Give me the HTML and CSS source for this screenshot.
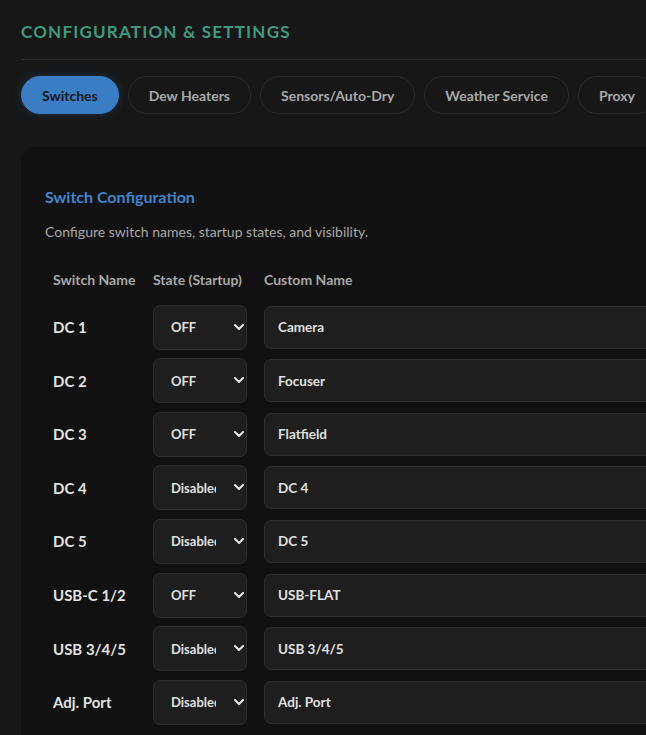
FILE: index.html
```html
<!DOCTYPE html>
<html lang="en">
<head>
  <meta charset="UTF-8" />
  <title>Configuration &amp; Settings</title>
  <meta name="viewport" content="width=device-width, initial-scale=1.0"/>
  <link rel="stylesheet" href="styles.css">
</head>
<body>

<h1 class="page-title">CONFIGURATION &amp; SETTINGS</h1>

<nav class="tabs">
  <button class="tab active">Switches</button>
  <button class="tab">Dew Heaters</button>
  <button class="tab">Sensors/Auto-Dry</button>
  <button class="tab">Weather Service</button>
  <button class="tab">Proxy</button>
</nav>

<section class="card">
  <h2 class="card-title">Switch Configuration</h2>
  <p class="card-desc">Configure switch names, startup states, and visibility.</p>

  <div class="switch-grid">
    <div class="col-head">Switch Name</div>
    <div class="col-head">State (Startup)</div>
    <div class="col-head">Custom Name</div>

    <div class="sw-name">DC 1</div>
    <div class="sel-wrap">
      <select><option>OFF</option><option>ON</option><option>Disabled</option></select>
      <svg class="chev" viewBox="0 0 10 6"><path d="M1 1l4 4 4-4" /></svg>
    </div>
    <div><input type="text" value="Camera" /></div>

    <div class="sw-name">DC 2</div>
    <div class="sel-wrap">
      <select><option>OFF</option><option>ON</option><option>Disabled</option></select>
      <svg class="chev" viewBox="0 0 10 6"><path d="M1 1l4 4 4-4" /></svg>
    </div>
    <div><input type="text" value="Focuser" /></div>

    <div class="sw-name">DC 3</div>
    <div class="sel-wrap">
      <select><option>OFF</option><option>ON</option><option>Disabled</option></select>
      <svg class="chev" viewBox="0 0 10 6"><path d="M1 1l4 4 4-4" /></svg>
    </div>
    <div><input type="text" value="Flatfield" /></div>

    <div class="sw-name">DC 4</div>
    <div class="sel-wrap">
      <select><option>Disabled</option><option>OFF</option><option>ON</option></select>
      <svg class="chev" viewBox="0 0 10 6"><path d="M1 1l4 4 4-4" /></svg>
    </div>
    <div><input type="text" value="DC 4" /></div>

    <div class="sw-name">DC 5</div>
    <div class="sel-wrap">
      <select><option>Disabled</option><option>OFF</option><option>ON</option></select>
      <svg class="chev" viewBox="0 0 10 6"><path d="M1 1l4 4 4-4" /></svg>
    </div>
    <div><input type="text" value="DC 5" /></div>

    <div class="sw-name">USB-C 1/2</div>
    <div class="sel-wrap">
      <select><option>OFF</option><option>ON</option><option>Disabled</option></select>
      <svg class="chev" viewBox="0 0 10 6"><path d="M1 1l4 4 4-4" /></svg>
    </div>
    <div><input type="text" value="USB-FLAT" /></div>

    <div class="sw-name">USB 3/4/5</div>
    <div class="sel-wrap">
      <select><option>Disabled</option><option>OFF</option><option>ON</option></select>
      <svg class="chev" viewBox="0 0 10 6"><path d="M1 1l4 4 4-4" /></svg>
    </div>
    <div><input type="text" value="USB 3/4/5" /></div>

    <div class="sw-name">Adj. Port</div>
    <div class="sel-wrap">
      <select><option>Disabled</option><option>OFF</option><option>ON</option></select>
      <svg class="chev" viewBox="0 0 10 6"><path d="M1 1l4 4 4-4" /></svg>
    </div>
    <div><input type="text" value="Adj. Port" /></div>
  </div>
</section>

</body>
</html>
```

FILE: styles.css
```css
html, body {
  overflow: hidden;
}
body {
  font-family: 'Lato', sans-serif;
  background: #171717;
  margin: 0;
  padding: 20px 0 0 21px;
  color: #ddd;
}
.page-title {
  margin: 0;
  padding-bottom: 15px;
  border-bottom: 1px solid #2c2c2c;
  font-size: 17px;
  line-height: 24px;
  font-weight: 700;
  letter-spacing: 1.2px;
  color: #3e9b80;
}
.tabs {
  display: flex;
  gap: 9px;
  margin-top: 16px;
  white-space: nowrap;
}
.tab {
  height: 38px;
  padding: 0 20px;
  border: 1px solid #2b2b2b;
  border-radius: 19px;
  background: #171717;
  color: #a8a8a8;
  font-family: inherit;
  font-size: 14px;
  font-weight: 700;
  flex-shrink: 0;
}
.tab.active {
  background: #3b7dc4;
  border-color: #3b7dc4;
  color: #101820;
  box-shadow: 0 0 10px rgba(59,125,196,0.25);
}
.card {
  margin-top: 33px;
  width: 760px;
  background: #111;
  border-radius: 14px;
  padding: 40px 24px 40px 24px;
}
.card-title {
  margin: 0;
  font-size: 16px;
  line-height: 20px;
  font-weight: 700;
  color: #3f86cf;
}
.card-desc {
  margin: 16px 0 0;
  font-size: 14px;
  line-height: 18px;
  color: #a9a9a9;
}
.switch-grid {
  display: grid;
  grid-template-columns: 100px 111px 1fr;
  row-gap: 8.6px;
  margin-top: 30px;
  align-items: center;
}
.switch-grid > div {
  padding: 0 8px;
}
.col-head {
  font-size: 14px;
  font-weight: 700;
  color: #a8a8a8;
  line-height: 18px;
  padding-bottom: 7px !important;
  white-space: nowrap;
}
.sw-name {
  font-size: 15px;
  font-weight: 700;
  color: #e2e2e2;
}
.sel-wrap {
  position: relative;
}
select {
  appearance: none;
  -webkit-appearance: none;
  width: 94px;
  height: 45px;
  padding: 0 30px 0 17px;
  background: #1e1e1e;
  border: 1px solid #2e2e2e;
  border-radius: 7px;
  color: #e0e0e0;
  font-family: inherit;
  font-size: 13px;
  font-weight: 700;
}
.chev {
  position: absolute;
  left: 89px;
  top: 19px;
  width: 10px;
  height: 6px;
  fill: none;
  stroke: #e6e6e6;
  stroke-width: 2;
  stroke-linecap: round;
  stroke-linejoin: round;
  pointer-events: none;
}
input {
  box-sizing: border-box;
  width: 100%;
  height: 43px;
  padding: 0 13px;
  background: #1e1e1e;
  border: 1px solid #2e2e2e;
  border-radius: 7px;
  color: #e0e0e0;
  font-family: inherit;
  font-size: 13.5px;
  font-weight: 700;
}
```
